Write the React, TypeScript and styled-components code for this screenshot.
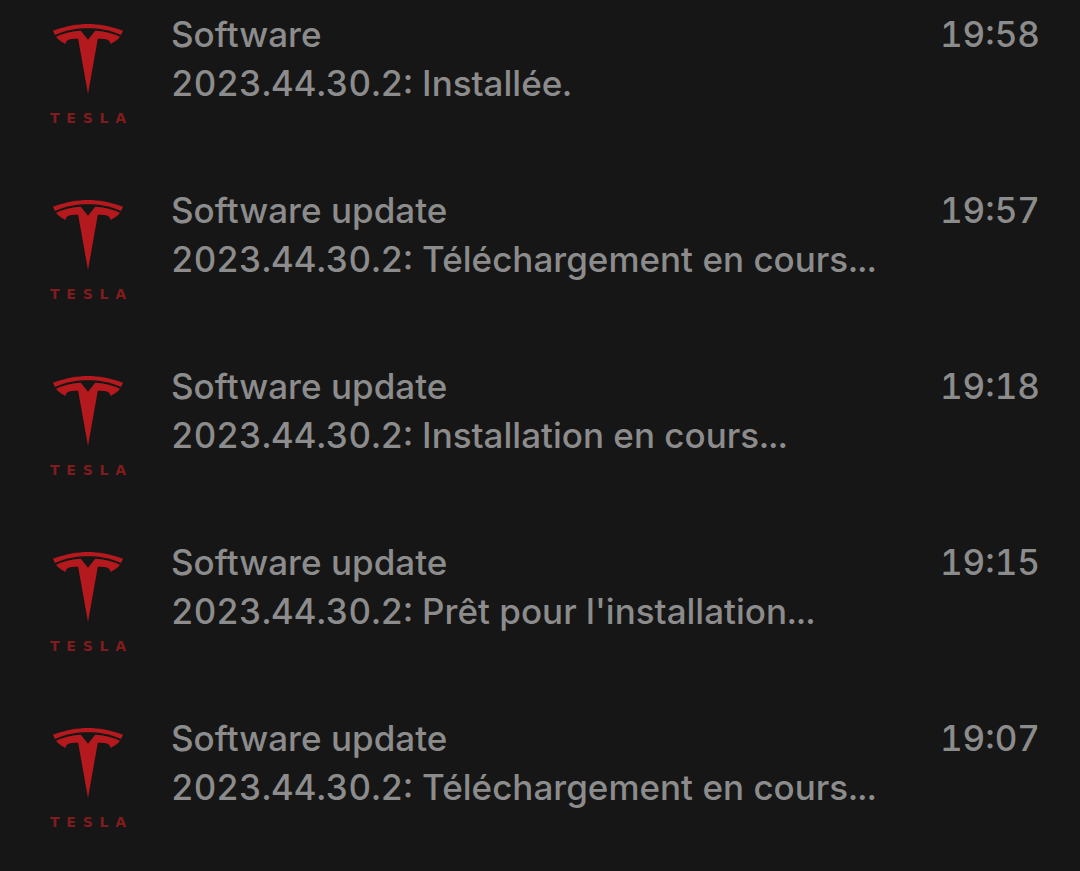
import React from 'react';
import styled, { createGlobalStyle } from 'styled-components';

const GlobalStyle = createGlobalStyle`
  * { box-sizing: border-box; }
  body {
    margin: 0;
    background: #161616;
    color: #8c8c8c;
    font-family: Inter, 'Liberation Sans', sans-serif;
    font-weight: 500;
    font-variant-numeric: tabular-nums;
  }
`;

const List = styled.ul`
  display: flex;
  flex-direction: column;
  gap: 60px;
  margin: 0;
  padding: 10px 40px 40px 50px;
  list-style: none;
`;

const Row = styled.li`
  display: flex;
  align-items: flex-start;
  height: 116px;
`;

const Brand = styled.div`
  flex: none;
  display: flex;
  flex-direction: column;
  align-items: center;
  gap: 16px;
  width: 76px;
  margin-right: 45px;
  padding-top: 14px;
  color: #b4191d;
`;

const Emblem = styled.svg`
  display: block;
  width: 70px;
  height: 70px;
`;

const Wordmark = styled.div`
  display: flex;
  justify-content: space-between;
  width: 100%;
  font-family: 'DejaVu Sans', sans-serif;
  font-size: 14px;
  font-weight: 700;
  line-height: 16px;
  color: #7e1c1e;
`;

const Message = styled.div`
  flex: 1;
  min-width: 0;
`;

const Title = styled.h2`
  margin: 0;
  font-size: 35px;
  font-weight: 500;
  line-height: 49px;
`;

const Detail = styled.p`
  margin: 0;
  font-size: 35px;
  line-height: 49px;
`;

const Time = styled.time`
  flex: none;
  font-size: 35px;
  line-height: 49px;
`;

const entries = [
  { title: 'Software', detail: '2023.44.30.2: Installée.', time: '19:58' },
  { title: 'Software update', detail: '2023.44.30.2: Téléchargement en cours...', time: '19:57' },
  { title: 'Software update', detail: '2023.44.30.2: Installation en cours...', time: '19:18' },
  { title: 'Software update', detail: "2023.44.30.2: Prêt pour l'installation...", time: '19:15' },
  { title: 'Software update', detail: '2023.44.30.2: Téléchargement en cours...', time: '19:07' },
];

function TeslaLogo() {
  return (
    <Brand>
      <Emblem viewBox="0 0 24 24" fill="currentColor" aria-hidden="true">
        <path d="M12 5.362l2.475-3.026s4.245.09 8.471 2.054c-1.082 1.636-3.231 2.438-3.231 2.438-.146-1.439-1.154-1.79-4.354-1.79L12 24 8.619 5.034c-3.18 0-4.188.354-4.335 1.792 0 0-2.146-.795-3.229-2.43C5.28 2.431 9.525 2.34 9.525 2.34L12 5.362zM12 1.463c3.415-.03 7.326.528 11.328 2.28.535-.968.672-1.395.672-1.395C19.625.612 15.528.015 12 0 8.472.015 4.375.61 0 2.349c0 0 .195.525.672 1.396C4.674 1.989 8.585 1.435 12 1.46z" />
      </Emblem>
      <Wordmark>
        {'TESLA'.split('').map((letter) => (
          <span key={letter}>{letter}</span>
        ))}
      </Wordmark>
    </Brand>
  );
}

export default function App() {
  return (
    <>
      <GlobalStyle />
      <List>
        {entries.map((entry) => (
          <Row key={entry.time}>
            <TeslaLogo />
            <Message>
              <Title>{entry.title}</Title>
              <Detail>{entry.detail}</Detail>
            </Message>
            <Time>{entry.time}</Time>
          </Row>
        ))}
      </List>
    </>
  );
}
